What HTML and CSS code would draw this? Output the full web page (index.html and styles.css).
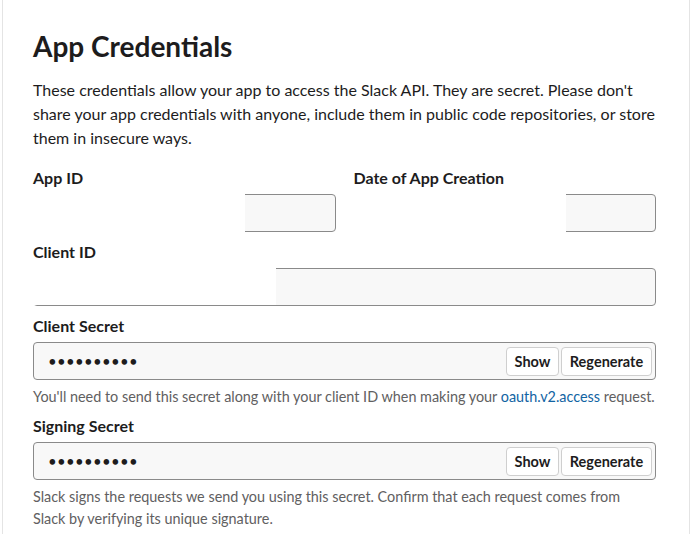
FILE: index.html
```html
<!DOCTYPE html>
<html lang="en">
<head>
<meta charset="utf-8">
<title>App Credentials</title>
<link rel="stylesheet" href="styles.css">
</head>
<body>
<div class="card">
  <h1 class="title">App Credentials</h1>
  <p class="intro">These credentials allow your app to access the Slack API. They are secret. Please don't share your app credentials with anyone, include them in public code repositories, or store them in insecure ways.</p>

  <div class="row-2">
    <div class="field">
      <div class="label">App ID</div>
      <div class="input short"><span class="mask mask-app"></span></div>
    </div>
    <div class="field">
      <div class="label">Date of App Creation</div>
      <div class="input short"><span class="mask mask-date"></span></div>
    </div>
  </div>

  <div class="field">
    <div class="label">Client ID</div>
    <div class="input"><span class="mask mask-client"></span></div>
  </div>

  <div class="field field-help">
    <div class="label">Client Secret</div>
    <div class="input secret">
      <span class="dots">••••••••••</span>
      <div class="actions">
        <button class="btn btn-show">Show</button>
        <button class="btn btn-regen">Regenerate</button>
      </div>
    </div>
    <p class="help">You'll need to send this secret along with your client ID when making your <a href="#" class="link">oauth.v2.access</a> request.</p>
  </div>

  <div class="field field-help">
    <div class="label">Signing Secret</div>
    <div class="input secret">
      <span class="dots">••••••••••</span>
      <div class="actions">
        <button class="btn btn-show">Show</button>
        <button class="btn btn-regen">Regenerate</button>
      </div>
    </div>
    <p class="help">Slack signs the requests we send you using this secret. Confirm that each request comes from Slack by verifying its unique signature.</p>
  </div>
</div>
</body>
</html>
```
FILE: styles.css
```css
html, body {
  margin: 0;
  padding: 0;
  background: #ffffff;
}

body {
  font-family: Lato, "Noto Sans", sans-serif;
  color: #1d1c1d;
}

.card {
  box-sizing: border-box;
  margin-left: 2px;
  width: 688px;
  border: 1px solid #e4e4e4;
  border-top: none;
  padding: 28px 33px 40px 30px;
}

.title {
  margin: 0;
  font-size: 28px;
  line-height: 36px;
  font-weight: 700;
}

.intro {
  margin: 14px 0 17px;
  font-size: 16px;
  line-height: 24px;
}

.row-2 {
  display: grid;
  grid-template-columns: 1fr 1fr;
  column-gap: 18px;
}

.field {
  margin-bottom: 9px;
}

.field-help {
  margin-bottom: 7px;
}

.label {
  font-size: 16px;
  line-height: 22px;
  font-weight: 700;
  margin-bottom: 5px;
}

.input {
  position: relative;
  box-sizing: border-box;
  height: 38px;
  border: 1px solid #8a8a8a;
  border-radius: 4px;
  background: #f8f8f8;
}

.mask {
  position: absolute;
  background: #ffffff;
}

.mask-app {
  left: -1px;
  top: -1px;
  width: 212px;
  height: 38px;
}

.mask-date {
  left: -1px;
  top: -1px;
  width: 212px;
  height: 38px;
}

.mask-client {
  left: -1px;
  top: -1px;
  width: 243px;
  height: 37px;
}

.secret {
  display: flex;
  align-items: center;
  justify-content: space-between;
  padding: 0 3px 0 14px;
}

.dots {
  font-size: 15px;
  letter-spacing: 0.3px;
  color: #1d1c1d;
}

.actions {
  display: flex;
  gap: 2px;
}

.btn {
  box-sizing: border-box;
  height: 29px;
  padding: 0;
  border: 1px solid #cfcfcf;
  border-radius: 4px;
  background: #ffffff;
  font-family: Lato, "Noto Sans", sans-serif;
  font-size: 14.5px;
  font-weight: 700;
  color: #1d1c1d;
}

.btn-show {
  width: 53px;
}

.btn-regen {
  width: 91px;
}

.help {
  margin: 6px 0 0;
  font-size: 14.4px;
  line-height: 22px;
  color: #616061;
}

.link {
  color: #1264a3;
  text-decoration: none;
}
```
